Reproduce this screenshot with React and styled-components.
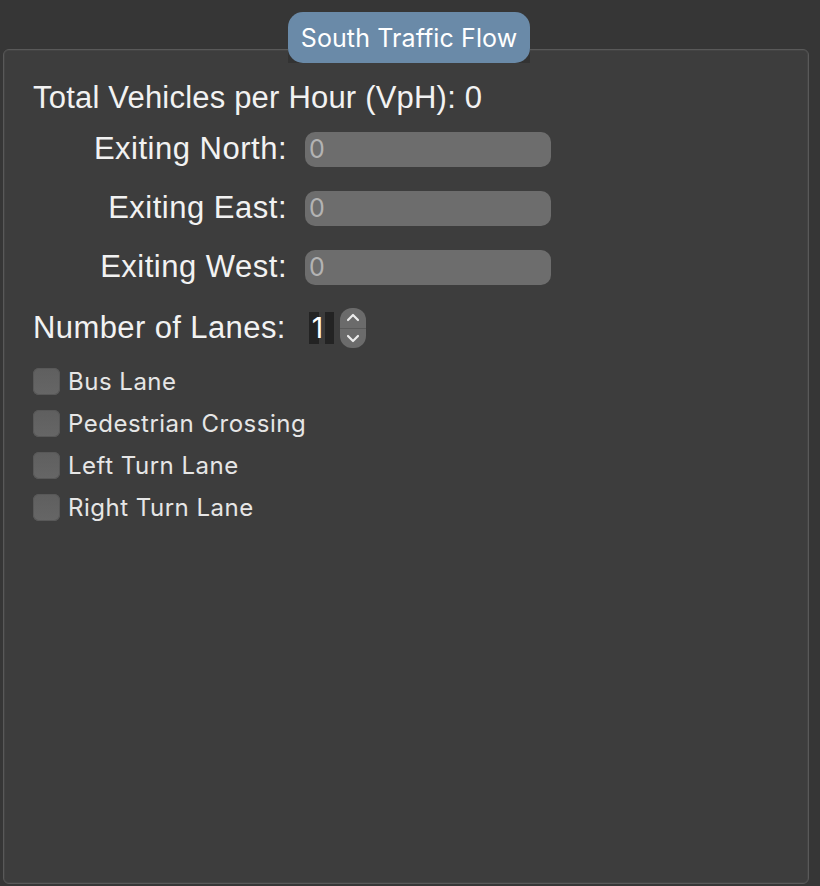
import React from 'react';
import styled, { createGlobalStyle } from 'styled-components';

const GlobalStyle = createGlobalStyle`
  html, body {
    margin: 0;
    padding: 0;
    background: #363636;
    overflow: hidden;
  }
`;

const Page = styled.div`
  padding: 49px 11px 2px 3px;
  height: 886px;
  box-sizing: border-box;
`;

const Panel = styled.div`
  position: relative;
  height: 100%;
  background: #3d3d3d;
  border: 1px solid #595959;
  border-radius: 6px;
  box-shadow: inset 0 0 0 1px #444;
  padding: 29px 0 0 29px;
  box-sizing: border-box;
  font-family: "Liberation Sans", Arial, sans-serif;
  color: #f2f2f2;
`;

const TabWrap = styled.div`
  position: absolute;
  top: -38px;
  left: 284px;
  width: 242px;
  height: 51px;
  background: linear-gradient(transparent 37px, #333 37px);
`;

const Tab = styled.div`
  height: 51px;
  border-radius: 15px;
  background: #6a8aa8;
  color: #fff;
  font-family: "Inter", "Noto Sans", sans-serif;
  font-size: 25px;
  display: flex;
  align-items: center;
  justify-content: center;
  letter-spacing: 0.1px;
`;

const Heading = styled.div`
  font-size: 31px;
  line-height: 38px;
  margin-bottom: 14px;
  letter-spacing: 0.2px;
`;

const FieldGrid = styled.div`
  display: grid;
  grid-template-columns: 254px 246px;
  column-gap: 18px;
  row-gap: 23px;
  align-items: center;
`;

const FieldLabel = styled.div`
  text-align: right;
  font-size: 31px;
  letter-spacing: 0.5px;
`;

const Field = styled.div`
  height: 35px;
  border-radius: 10px;
  background: #6d6d6d;
  color: #b3b3b3;
  font-family: "Inter", "Noto Sans", sans-serif;
  font-size: 25px;
  display: flex;
  align-items: center;
  padding-left: 4px;
  box-sizing: border-box;
`;

const LanesRow = styled.div`
  display: flex;
  align-items: center;
  margin-top: 23px;
  height: 40px;
`;

const LanesLabel = styled.div`
  font-size: 31px;
  letter-spacing: 0.4px;
  margin-right: 23px;
`;

const LanesValue = styled.div`
  width: 25px;
  height: 32px;
  background: linear-gradient(90deg, #232323 0 10px, #3b3b3b 10px 16px, #232323 16px);
  color: #fff;
  font-family: "Inter", "Noto Sans", sans-serif;
  font-size: 28px;
  line-height: 32px;
  padding-left: 3px;
  box-sizing: border-box;
  margin-right: 6px;
`;

const Stepper = styled.div`
  width: 26px;
  height: 40px;
  border-radius: 12px;
  background: #6b6b6b;
  display: flex;
  flex-direction: column;
  overflow: hidden;
`;

const StepHalf = styled.div`
  flex: 1;
  display: flex;
  align-items: center;
  justify-content: center;
  border-top: ${p => (p.$bottom ? '1px solid #5a5a5a' : 'none')};
`;

const Checks = styled.div`
  display: flex;
  flex-direction: column;
  gap: 15px;
  margin-top: 20px;
`;

const CheckRow = styled.label`
  display: flex;
  align-items: center;
  gap: 8px;
  height: 27px;
  font-family: "Inter", "Noto Sans", sans-serif;
  font-size: 24px;
  letter-spacing: 0.5px;
  color: #e6e6e6;
`;

const Box = styled.span`
  width: 27px;
  height: 27px;
  border-radius: 6px;
  background: linear-gradient(#5f5f5f, #666);
  box-shadow: inset 0 0 0 1px #585858;
  flex-shrink: 0;
`;

const Chevron = ({ up }) => (
  <svg width="14" height="9" viewBox="0 0 14 9">
    <path
      d={up ? 'M2 7 L7 2 L12 7' : 'M2 2 L7 7 L12 2'}
      fill="none"
      stroke="#ececec"
      strokeWidth="2.2"
      strokeLinecap="round"
      strokeLinejoin="round"
    />
  </svg>
);

const exits = ['Exiting North:', 'Exiting East:', 'Exiting West:'];
const options = ['Bus Lane', 'Pedestrian Crossing', 'Left Turn Lane', 'Right Turn Lane'];

export default function App() {
  return (
    <Page>
      <GlobalStyle />
      <Panel>
        <TabWrap>
          <Tab>South Traffic Flow</Tab>
        </TabWrap>
        <Heading>Total Vehicles per Hour (VpH): 0</Heading>
        <FieldGrid>
          {exits.map(label => (
            <React.Fragment key={label}>
              <FieldLabel>{label}</FieldLabel>
              <Field>0</Field>
            </React.Fragment>
          ))}
        </FieldGrid>
        <LanesRow>
          <LanesLabel>Number of Lanes:</LanesLabel>
          <LanesValue>1</LanesValue>
          <Stepper>
            <StepHalf><Chevron up /></StepHalf>
            <StepHalf $bottom><Chevron /></StepHalf>
          </Stepper>
        </LanesRow>
        <Checks>
          {options.map(o => (
            <CheckRow key={o}>
              <Box />
              {o}
            </CheckRow>
          ))}
        </Checks>
      </Panel>
    </Page>
  );
}
